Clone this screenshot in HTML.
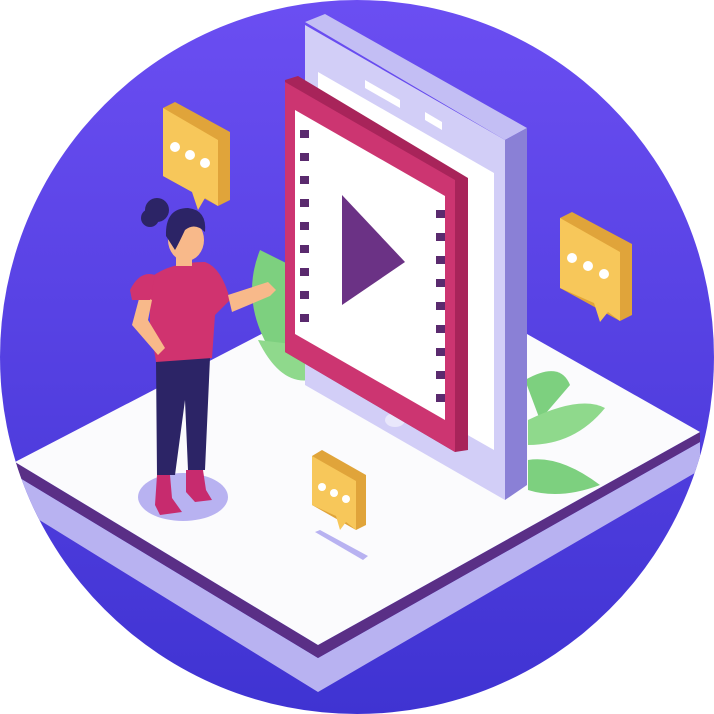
<!DOCTYPE html>
<html><head><style>html,body{margin:0;padding:0;background:#fff}svg{display:block}</style></head><body>
<svg width="714" height="714" viewBox="0 0 714 714" xmlns="http://www.w3.org/2000/svg">
<defs>
<linearGradient id="bg" x1="0" y1="0" x2="0" y2="1"><stop offset="0" stop-color="#6b4ef2"/><stop offset="1" stop-color="#3f33d2"/></linearGradient>
<clipPath id="c"><circle cx="357" cy="357" r="357"/></clipPath>
</defs>
<circle cx="357" cy="357" r="357" fill="url(#bg)"/>
<g clip-path="url(#c)">
<polygon points="15,475 318,658 700,442 700,470 318,692 15,505" fill="#b8b2f1"/>
<polygon points="15,462 318,645 700,432 700,442 318,658 15,475" fill="#5a2f86"/>
<polygon points="15,462 400,262 700,432 318,645" fill="#fbfbfd"/>
<path d="M260,250 Q240,300 270,350 L300,350 L300,270 Z" fill="#7dd07f"/>
<path d="M258,340 Q280,385 310,380 L300,345 Z" fill="#8fd98c"/>
<path d="M525,380 Q560,360 570,385 L540,420 Z" fill="#7dd07f"/>
<path d="M528,420 Q580,395 605,408 Q575,445 528,445 Z" fill="#8fd98c"/>
<path d="M528,460 Q560,455 600,485 Q560,500 528,490 Z" fill="#7dd07f"/>
<polygon points="305,22 325,14 527,128 505,140" fill="#c3bef4"/>
<polygon points="505,140 527,128 527,485 505,500" fill="#8a80d6"/>
<polygon points="305,25 505,140 505,500 305,385" fill="#d2cef7"/>
<polygon points="318,72 494,173 494,450 318,350" fill="#ffffff"/>
<polygon points="365,80 400,100 400,108 365,88" fill="#ffffff"/>
<polygon points="425,112 442,122 442,130 425,120" fill="#ffffff"/>
<ellipse cx="395" cy="420" rx="10" ry="7" fill="#e9e7fb"/>
<polygon points="285,80 298,76 468,178 468,450 455,452 285,352" fill="#a8245a"/>
<polygon points="285,82 455,180 455,452 285,352" fill="#cc3571"/>
<polygon points="295,110 445,196 445,420 295,334" fill="#fff"/>
<polygon points="318,124 428,187 428,392 318,330" fill="#fff"/>
<g fill="#5a2a6e">
<rect x="300" y="130" width="9" height="8"/><rect x="300" y="153" width="9" height="8"/><rect x="300" y="176" width="9" height="8"/><rect x="300" y="199" width="9" height="8"/><rect x="300" y="222" width="9" height="8"/><rect x="300" y="245" width="9" height="8"/><rect x="300" y="268" width="9" height="8"/><rect x="300" y="291" width="9" height="8"/><rect x="300" y="314" width="9" height="8"/>
<rect x="436" y="210" width="9" height="8"/><rect x="436" y="233" width="9" height="8"/><rect x="436" y="256" width="9" height="8"/><rect x="436" y="279" width="9" height="8"/><rect x="436" y="302" width="9" height="8"/><rect x="436" y="325" width="9" height="8"/><rect x="436" y="348" width="9" height="8"/><rect x="436" y="371" width="9" height="8"/><rect x="436" y="394" width="9" height="8"/>
</g>
<polygon points="342,195 405,262 342,305" fill="#6b3285"/>
<g>
<polygon points="163,108 175,102 230,132 230,200 218,206 163,176" fill="#e0a43a"/>
<polygon points="163,108 218,140 218,206 205,198 198,210 192,192 163,176" fill="#f7c75a"/>
<circle cx="175" cy="147" r="5" fill="#fff"/><circle cx="190" cy="155" r="5" fill="#fff"/><circle cx="205" cy="163" r="5" fill="#fff"/>
</g>
<g>
<polygon points="560,218 572,212 632,244 632,315 620,321 560,288" fill="#e0a43a"/>
<polygon points="560,218 620,252 620,321 608,312 600,322 594,303 560,288" fill="#f7c75a"/>
<circle cx="572" cy="258" r="5" fill="#fff"/><circle cx="588" cy="266" r="5" fill="#fff"/><circle cx="604" cy="274" r="5" fill="#fff"/>
</g>
<g>
<polygon points="312,456 322,450 366,475 366,525 356,530 312,505" fill="#e0a43a"/>
<polygon points="312,456 356,481 356,530 346,522 340,530 336,516 312,505" fill="#f7c75a"/>
<circle cx="322" cy="487" r="4" fill="#fff"/><circle cx="334" cy="493" r="4" fill="#fff"/><circle cx="346" cy="499" r="4" fill="#fff"/>
</g>
<polygon points="315,532 320,530 368,556 363,560" fill="#b8b2f1"/>
<ellipse cx="183" cy="497" rx="45" ry="24" fill="#b8b2f1"/>
<path d="M156,360 L210,358 L205,470 L188,470 L185,400 L175,475 L157,475 Z" fill="#2c2466"/>
<path d="M157,475 L170,475 L172,498 L182,512 L160,515 L155,505 Z" fill="#c72b6e"/>
<path d="M186,470 L203,470 L206,490 L212,500 L195,502 L186,492 Z" fill="#c72b6e"/>
<path d="M150,278 Q170,262 205,262 Q222,268 230,300 L215,315 L212,358 L156,362 L150,325 Z" fill="#d0336f"/>
<path d="M228,295 L268,282 L276,290 L270,296 L232,312 Z" fill="#f8b98a"/>
<path d="M140,295 L132,325 L158,355 L165,348 L148,320 L152,300 Z" fill="#f8b98a"/>
<path d="M130,290 Q140,270 155,275 L150,300 L132,300 Z" fill="#d0336f"/>
<rect x="176" y="248" width="16" height="18" fill="#f8b98a"/>
<ellipse cx="186" cy="240" rx="18" ry="21" fill="#f8b98a"/>
<path d="M166,236 Q165,208 188,208 Q207,210 205,232 Q195,222 185,230 Q178,245 175,250 Z" fill="#2c2466"/>
<circle cx="157" cy="210" r="12" fill="#2c2466"/>
<circle cx="150" cy="218" r="9" fill="#2c2466"/>
</g>
</svg>
</body></html>
